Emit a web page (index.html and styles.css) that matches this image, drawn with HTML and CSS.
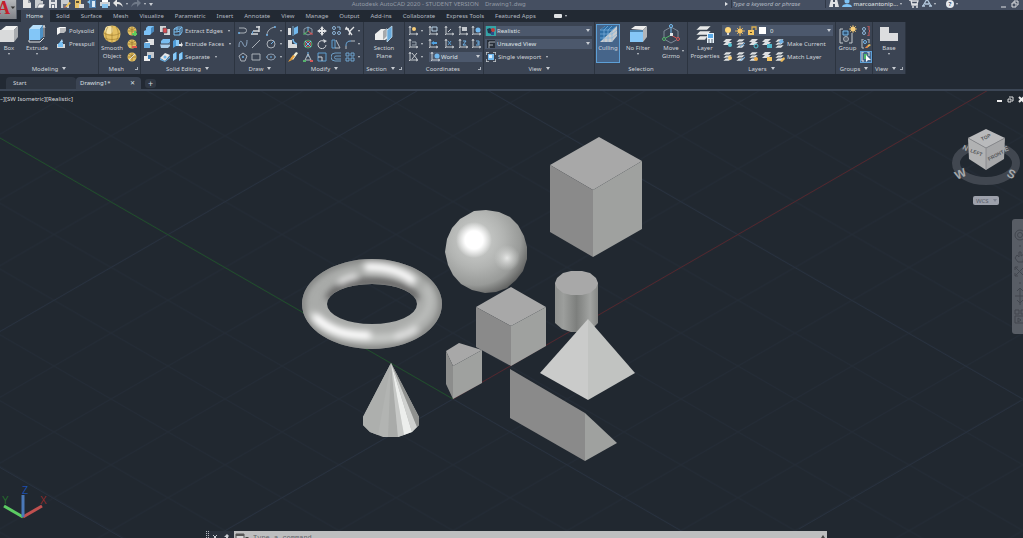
FILE: index.html
```html
<!DOCTYPE html>
<html lang="en">

<head>
    <meta charset="UTF-8">
    <meta name="viewport" content="width=device-width, initial-scale=1.0">
    <title>Autodesk AutoCAD 2020 - Drawing1.dwg</title>
    <link rel="stylesheet" href="styles.css">
</head>

<body>
    <!-- Icon sprite -->
    <svg class="sprite" aria-hidden="true">
        <symbol id="new" viewBox="0 0 10 10"><path d="M1 0h5l3 4v5H1z" fill="#e4e4e4"/><path d="M6 0v4h3" fill="#9aa0a8"/></symbol>
        <symbol id="open" viewBox="0 0 10 10"><path d="M0 0h5l1 2h2v7H0z" fill="#c9ccd0"/><path d="M2 9l2-4h6L8 9z" fill="#f3f3f3" stroke="#454f61" stroke-width=".5"/></symbol>
        <symbol id="save" viewBox="0 0 10 10"><path d="M1 0h8v9H1z" fill="#dfe1e4"/><path d="M3 5h4v4H3zM3 0h4v3H3z" fill="#6d7685"/><path d="M4 6h2v3H4z" fill="#eee"/></symbol>
        <symbol id="saveas" viewBox="0 0 10 10"><path d="M0 0h8v9H0z" fill="#c9ccd0"/><path d="M2 5h4v4H2z" fill="#6d7685"/><path d="M4 8l4-5 2 1-4 4z" fill="#f0c35a"/><path d="M3 9l1-2 1 1z" fill="#d85040"/></symbol>
        <symbol id="openweb" viewBox="0 0 10 10"><path d="M1 0h6v9H1z" fill="#e9c46a"/><path d="M5 5h5v4H5z" fill="#d8d8d8"/><path d="M2 2h3v2H2z" fill="#5b5136"/></symbol>
        <symbol id="saveweb" viewBox="0 0 10 10"><path d="M2 0h7v9H2z" fill="#4e7fae"/><path d="M5 2h3v6H5z" fill="#dbe9f5"/><path d="M0 3l3-2v4z" fill="#7fc3f5"/></symbol>
        <symbol id="print" viewBox="0 0 10 10"><path d="M2 0h6v3H2z" fill="#fff"/><path d="M0 3h10v4H0z" fill="#cfd2d6"/><path d="M2 5h6v4H2z" fill="#88c4ee"/></symbol>
        <symbol id="undo" viewBox="0 0 10 10"><path d="M0 4l4-4v3c4 0 5 2 6 5-2-2-3-3-6-3v3z" fill="#e4e4e4"/></symbol>
        <symbol id="redo" viewBox="0 0 10 10"><path d="M10 4L6 0v3C2 3 1 5 0 8c2-2 3-3 6-3v3z" fill="#6f7988"/></symbol>

        <symbol id="box" viewBox="0 0 18 20"><path d="M1 6l5-4h12l-4 4z" fill="#f1f1f1"/><path d="M14 6l4-4v11l-4 5z" fill="#a9acb0"/><path d="M0 6h14v12H0z" fill="#d9dadb"/></symbol>
        <symbol id="extrude" viewBox="0 0 18 20"><path d="M1 5l4-4h10l-3 4z" fill="#b7defa"/><path d="M12 5l3-4v12l-3 3z" fill="#4d91c6"/><path d="M1 5h11v11H1z" fill="#83c6f7"/><path d="M1 16v2h11l4-4" fill="none" stroke="#e0e0e0"/><path d="M16 13V2M15 4l1-3 1 3" fill="none" stroke="#e0e0e0" stroke-width=".8"/></symbol>
        <symbol id="polysolid" viewBox="0 0 10 10"><path d="M1 2l3-1v6L1 9z" fill="#f4f4f4"/><path d="M4 1h6v4l-2 2H4z" fill="#b9bbbe"/><path d="M4 1h6l-1 1H3z" fill="#fff"/></symbol>
        <symbol id="presspull" viewBox="0 0 10 10"><path d="M1 5h8v4H1z" fill="#d5d7d9"/><path d="M2 5l3-3 2 2v4H2z" fill="#79c0f4"/><path d="M4 3l2-3 1 3z" fill="#aedafa"/></symbol>
        <symbol id="smooth" viewBox="0 0 18 20"><circle cx="9" cy="10" r="8.500" fill="#e3bf62"/><circle cx="6" cy="6" r="4" fill="#f7e3a4"/><path d="M1 9c4 3 12 3 16 0M2 14c4 2 10 2 14 0M9 2v17M5 3c-3 4-3 10 0 14M13 3c3 4 3 10 0 14" fill="none" stroke="#9c7a2e" stroke-width=".6"/></symbol>
        <symbol id="mesh" viewBox="0 0 10 10"><circle cx="5" cy="5" r="4.500" fill="#e3bf62"/><path d="M1 5h8M5 1v8M2 2c2 2 4 2 6 0" fill="none" stroke="#8f702b" stroke-width=".7"/></symbol>
        <symbol id="union" viewBox="0 0 10 10"><path d="M0 5l2-1V2l2-2h6v5L7 7v1L6 9H0z" fill="#7cc1f5"/><path d="M7 2l3-2v5L7 8z" fill="#4788bd"/></symbol>
        <symbol id="subtract" viewBox="0 0 10 10"><path d="M3 0h7v6H6z" fill="#dfe0e1"/><path d="M0 4h6v5H0z" fill="#68aee3"/><path d="M0 4l2-1h5L6 4z" fill="#f1f1f1"/></symbol>
        <symbol id="intersect" viewBox="0 0 10 10"><path d="M3 0h7v6H3z" fill="#c6c9cc"/><path d="M0 4h6v5H0z" fill="#ececec"/><path d="M4 3h3v4H4z" fill="#397fb9"/></symbol>
        <symbol id="interfere" viewBox="0 0 10 10"><path d="M0 0h6v6H0zM4 3h6v6H4z" fill="#d4d6d8"/><path d="M3 2h4v5H3z" fill="#d94e52" stroke="#3b4453" stroke-width=".6"/></symbol>
        <symbol id="slice" viewBox="0 0 10 10"><path d="M1 2l2-2h7v3L8 5H1z" fill="#79bdf0"/><path d="M0 5h8l2-1v3L8 9H1z" fill="#a9cde9"/><path d="M0 5h10" stroke="#3d4656"/></symbol>
        <symbol id="thicken" viewBox="0 0 10 10"><path d="M0 6l5-5 5 2-5 6z" fill="#e6e6e6"/><path d="M0 6l5 3 5-5v2l-5 4-5-2z" fill="#64acdf"/><circle cx="5" cy="5" r="1.500" fill="#6fb6eb"/></symbol>
        <symbol id="edges" viewBox="0 0 10 10"><path d="M1 3l3-2h5v5L7 9H1zM1 3h6v6M7 3l2-2M4 1v5H1M4 6l3-1" fill="none" stroke="#79bdf0"/></symbol>
        <symbol id="faces" viewBox="0 0 10 10"><path d="M0 2l3-2v7L0 9z" fill="#4f9cd8"/><path d="M3 1h3v6H3z" fill="#8acaf7"/><path d="M6 5h2V3l2 3-2 2V7H6z" fill="#e4e4e4"/></symbol>
        <symbol id="separate" viewBox="0 0 10 10"><path d="M0 2l3-2v7L0 9zM6 2l3-2v7L6 9z" fill="#8acaf7"/><path d="M3 0h1v7H3zM9 0h1v7H9z" fill="#4587b9"/></symbol>

        <symbol id="pline" viewBox="0 0 10 10"><path d="M1 2h5a2 2 0 010 5H1" fill="none" stroke="#aab0b8"/><circle cx="1" cy="7" r="1" fill="#6fb1e6"/></symbol>
        <symbol id="helix" viewBox="0 0 10 10"><path d="M8 0v6M5 1h4M2 5h6M0 8h7" fill="none" stroke="#d5d8dc" stroke-width="1.500"/><path d="M2 5l-1 3" stroke="#70aee0"/></symbol>
        <symbol id="arc" viewBox="0 0 10 10"><path d="M1 9c0-4 3-7 8-8" fill="none" stroke="#aab0b8"/><circle cx="1" cy="9" r="1" fill="#6fb1e6"/><circle cx="9" cy="1" r="1" fill="#6fb1e6"/></symbol>
        <symbol id="spline" viewBox="0 0 10 10"><path d="M1 8c0-8 3-6 4-3s4 5 4-4" fill="none" stroke="#8ea8c4"/></symbol>
        <symbol id="line" viewBox="0 0 10 10"><path d="M1 9l8-8" stroke="#aab0b8"/></symbol>
        <symbol id="circle" viewBox="0 0 10 10"><circle cx="5" cy="5" r="4" fill="none" stroke="#aab0b8"/><path d="M5 5l3-3" stroke="#6fb1e6"/></symbol>
        <symbol id="polygon" viewBox="0 0 10 10"><path d="M5 1l4 3-2 5H3L1 4z" fill="none" stroke="#aab0b8"/><circle cx="5" cy="5" r="1" fill="#6fb1e6"/></symbol>
        <symbol id="rect" viewBox="0 0 10 10"><path d="M1 2h8v6H1z" fill="none" stroke="#aab0b8"/></symbol>
        <symbol id="ellipse" viewBox="0 0 10 10"><ellipse cx="5" cy="5" rx="4" ry="3" fill="none" stroke="#8e9bab"/><path d="M4 5h2M0 5h1M9 5h1" stroke="#6fb1e6"/></symbol>

        <symbol id="mirror" viewBox="0 0 10 10"><path d="M0 2h3v7H0z" fill="#dfe1e3"/><path d="M6 2l4-2v7L6 9z" fill="#72b8ed"/><path d="M5 0v10" stroke="#8ecaf5" stroke-width=".7"/></symbol>
        <symbol id="fillet3d" viewBox="0 0 10 10"><path d="M0 1h4v4h5v4H0z" fill="#d8dadc"/><path d="M5 0c0 3 1 4 4 5" fill="none" stroke="#72b8ed" stroke-width="1.500"/></symbol>
        <symbol id="erase" viewBox="0 0 10 10"><path d="M3 6l5-6 2 1-5 7z" fill="#f2f0d8"/><path d="M2 7l3-4 2 1-3 4z" fill="#e8a03a"/><path d="M0 10l2-3 2 1z" fill="#e8a03a"/></symbol>
        <symbol id="gizmo" viewBox="0 0 10 10"><path d="M5 1l4 2v4L5 9 1 7V3z" fill="none" stroke="#8b98a6"/><path d="M5 5V1" stroke="#76bff4"/><path d="M5 5L1 8M0 8h3" stroke="#55b36c"/><path d="M5 5l4 3M7 8h3" stroke="#d65858"/></symbol>
        <symbol id="rotate3d" viewBox="0 0 10 10"><circle cx="5" cy="5" r="4" fill="none" stroke="#4fa768"/><circle cx="5" cy="5" r="2.500" fill="none" stroke="#d65858"/><path d="M2 2l6 6M8 2L2 8" stroke="#76bff4"/></symbol>
        <symbol id="scale3d" viewBox="0 0 10 10"><path d="M5 0v5" stroke="#76bff4"/><path d="M5 2l3 6H2z" fill="none" stroke="#b8bec5"/><path d="M0 9h3" stroke="#55b36c" stroke-width="2"/><path d="M7 9h3" stroke="#d65858" stroke-width="2"/></symbol>
        <symbol id="move" viewBox="0 0 10 10"><path d="M5 0l2 3H6v1h1V3l3 2-3 2V6H6v1h1l-2 3-2-3h1V6H3v1L0 5l3-2v1h1V3H3z" fill="#e2e4e6"/></symbol>
        <symbol id="rotate" viewBox="0 0 10 10"><path d="M8 3a4 4 0 10 1 3" fill="none" stroke="#d0d3d7"/><path d="M6 0l4 2-3 2z" fill="#d0d3d7"/></symbol>
        <symbol id="scale" viewBox="0 0 10 10"><path d="M1 1h8v8H1z" fill="none" stroke="#5f9fd2"/><path d="M1 5h4v4" fill="none" stroke="#d0d3d7"/></symbol>
        <symbol id="copy" viewBox="0 0 10 10"><g fill="none" stroke="#8fb6d8"><circle cx="3" cy="2" r="1.500"/><circle cx="3" cy="7" r="1.500"/><circle cx="8" cy="7" r="1.500"/><path d="M6 1h3v3"/></g></symbol>
        <symbol id="stretch" viewBox="0 0 10 10"><path d="M1 1h3v8H1z" fill="none" stroke="#5f9fd2"/><path d="M5 1l4 8H4" fill="none" stroke="#b8bec5"/></symbol>
        <symbol id="offset" viewBox="0 0 10 10"><path d="M10 1H4a4 4 0 000 8h6M10 4H5a1 1 0 000 3h5" fill="none" stroke="#6c9cc4"/></symbol>
        <symbol id="trim" viewBox="0 0 10 10"><path d="M1 1l6 8M9 1L5 5M5 5l-1 4M0 3h4" fill="none" stroke="#e2e4e6" stroke-width="1.300"/></symbol>
        <symbol id="fillet" viewBox="0 0 10 10"><path d="M1 10V7" stroke="#b8bec5"/><path d="M1 7c0-4 2-5 5-5" fill="none" stroke="#6fb1e6"/><path d="M6 2h4" stroke="#b8bec5"/></symbol>
        <symbol id="array" viewBox="0 0 10 10"><path d="M1 1h3v3H1zM6 1h3v3H6zM1 6h3v3H1zM6 6h3v3H6z" fill="none" stroke="#6fa4d0"/></symbol>

        <symbol id="section" viewBox="0 0 18 20"><path d="M0 10l6-5h8v8l-4 3H0z" fill="#eceded"/><path d="M8 7l4-3v8l-4 4z" fill="#a6a9ac"/><path d="M12 6l5-4v11l-5 5z" fill="#67a9da" stroke="#cfe6f7" stroke-width=".7"/></symbol>

        <symbol id="ucs" viewBox="0 0 10 10"><path d="M2 1v7h7M1 2l1-2 1 2M8 7l2 1-2 1M2 8l-1 1" fill="none" stroke="#c4c8cd"/></symbol>
        <symbol id="bulb" viewBox="0 0 10 10"><circle cx="5" cy="4" r="3" fill="#ffd77a"/><path d="M4 7h2v2H4z" fill="#d8d8d8"/></symbol>
        <symbol id="sun" viewBox="0 0 10 10"><circle cx="5" cy="5" r="2.500" fill="#f5c463"/><path d="M5 0v10M0 5h10M2 2l6 6M8 2L2 8" stroke="#f5c463" stroke-width=".8"/></symbol>
        <symbol id="unlock" viewBox="0 0 10 10"><path d="M1 4h6v5H1z" fill="#f2c462"/><path d="M5 4V1h4v3" fill="none" stroke="#d9ad50" stroke-width="1.300"/><path d="M3 6h2v1H3z" fill="#5a4a26"/></symbol>

        <symbol id="realistic" viewBox="0 0 10 10"><path d="M0 0h10v10H0z" fill="#35a3a6"/><path d="M1 3l3-1 2 2v4L2 7z" fill="#24324a"/><circle cx="7" cy="4" r="2" fill="#c23b3b"/><path d="M5 6h3v3H5z" fill="#2c4d8a"/></symbol>
        <symbol id="saved" viewBox="0 0 10 10"><path d="M1 1h8v8H1z" fill="#272e38"/><path d="M3 3h6M3 6h4M3 3v6" stroke="#a5abb3"/></symbol>
        <symbol id="viewport" viewBox="0 0 10 10"><path d="M0 3V0h3M7 0h3v3M10 7v3H7M3 10H0V7" fill="none" stroke="#c8ccd0" stroke-width="1.500"/><path d="M2 2h6v6H2z" fill="#74b9ee"/><path d="M3 3h3v3H3z" fill="#d8ecfb"/></symbol>

        <symbol id="culling" viewBox="0 0 18 20"><path d="M1 6l5-4h12v10l-5 6H1z" fill="#c9cbcd"/><path d="M1 6l5-4h12L1 18z" fill="#2f6ea5"/><path d="M1 6h12v12M5 6v12M9 6v12M1 10h12M1 14h12M13 6l5-4M13 10l5-4M13 14l5-4M5 6l4-4M9 6l4-4" fill="none" stroke="#7fb3dc" stroke-width=".7"/></symbol>
        <symbol id="nofilter" viewBox="0 0 18 20"><path d="M2 5l4-3h12l-4 4z" fill="#ededed"/><path d="M14 6l4-4v11l-4 5z" fill="#b3b5b8"/><path d="M1 6h13v12H1z" fill="#86c7f7"/><path d="M1 6h13v2H1z" fill="#4d84ae"/></symbol>
        <symbol id="movegizmo" viewBox="0 0 18 20"><path d="M9 3l7 4v8l-7 4-7-4V7z" fill="none" stroke="#7e8a98"/><path d="M9 11V2" stroke="#76bff4"/><path d="M9 11l-7 4" stroke="#55b36c"/><path d="M9 11l7 4" stroke="#d65858"/><circle cx="9" cy="2" r="1.500" fill="#3b4453" stroke="#76bff4"/><circle cx="2" cy="15" r="1.500" fill="#3b4453" stroke="#55b36c"/><circle cx="16" cy="15" r="1.500" fill="#3b4453" stroke="#d65858"/><path d="M8 9h3v3H8z" fill="#e2e4e6"/></symbol>

        <symbol id="layerprops" viewBox="0 0 18 20"><path d="M4 2h11l-4 4H0zM4 7h11l-4 4H0zM4 12h8l-3 4H0z" fill="#e6e7e8" stroke="#3b4453" stroke-width=".5"/><path d="M11 9h7v10h-7z" fill="#e9f3fb"/><path d="M12 10h5v4h-5z" fill="#5aa9e6"/><path d="M12 16h2M15 16h2M12 18h2M15 18h2" stroke="#56606e"/></symbol>
        <symbol id="layer" viewBox="0 0 10 10"><path d="M3 0h6L6 3H0zM3 3h6L6 6H0z" fill="#dddfe1"/></symbol>
        <symbol id="layers" viewBox="0 0 10 10"><path d="M3 0h6L6 3H0zM3 3h6L6 6H0zM3 6h6L6 9H0z" fill="#dddfe1" stroke="#3b4453" stroke-width=".5"/></symbol>
        <symbol id="group" viewBox="0 0 18 20"><path d="M4 5H1v14h3M10 19h3V9" fill="none" stroke="#c4c8cd"/><path d="M4 7h5v4H4z" fill="#315577" stroke="#76b8eb"/><circle cx="7" cy="15" r="2.500" fill="#59616e" stroke="#a8adb4"/><circle cx="14" cy="5" r="2.500" fill="#f7cd78"/><path d="M14 1v8M10 5h8M11 2l6 6M17 2l-6 6" stroke="#f7cd78" stroke-width=".7"/></symbol>
        <symbol id="ungroup" viewBox="0 0 10 10"><path d="M6 0h2v4l1 1-1 1v4H6" fill="none" stroke="#cc5d5d"/><circle cx="3" cy="3" r="1.500" fill="none" stroke="#8fb6d8"/><circle cx="3" cy="7" r="1.500" fill="none" stroke="#8fb6d8"/></symbol>
        <symbol id="groupedit" viewBox="0 0 10 10"><path d="M3 0H1v9h2M6 0h2v4" fill="none" stroke="#b8bec5"/><circle cx="4" cy="3" r="1.500" fill="none" stroke="#76b8eb"/><path d="M4 9l4-4 2 1-4 3z" fill="#eebc5c"/><path d="M4 9l2-2 1 1z" fill="#d85040"/></symbol>
        <symbol id="groupsel" viewBox="0 0 10 10"><path d="M3 0H1v9h2M6 0h2v4" fill="none" stroke="#dfe3e8"/><path d="M3 2h3v5H3z" fill="#4fba6b"/><path d="M5 3l5 5H7l-2 2z" fill="#fff"/></symbol>
        <symbol id="base" viewBox="0 0 18 20"><path d="M0 3h9v6h9v8H0z" fill="#dcdddf"/></symbol>

        <symbol id="find" viewBox="0 0 10 10"><path d="M2 0h2v3h2V0h2l2 8H6V5H4v3H0z" fill="#dfe1e4"/></symbol>
        <symbol id="user" viewBox="0 0 10 10"><circle cx="5" cy="2" r="2.500" fill="#7fc3f5"/><path d="M0 8c0-4 10-4 10 0z" fill="#7fc3f5"/></symbol>
        <symbol id="cart" viewBox="0 0 10 10"><path d="M0 1h2l1 5h6M2 2h7l-1 3H3" fill="none" stroke="#dfe1e4" stroke-width="1.300"/><circle cx="4" cy="8" r="1" fill="#dfe1e4"/><circle cx="8" cy="8" r="1" fill="#dfe1e4"/></symbol>
        <symbol id="share" viewBox="0 0 10 10"><path d="M5 0L1 7M5 0l4 7M0 7h3M7 7h3M3 5h4" fill="none" stroke="#b4c9dd" stroke-width="1.300"/></symbol>
    </svg>

    <header class="titlebar">
        <button class="app-button" type="button" aria-label="Application menu">
            <svg width="18" height="20" viewBox="0 0 18 20"><text class="app-logo" x="-3" y="14">A</text><path d="M12 6h5l-2.500 3z" fill="#333"/></svg>
        </button>
        <nav class="quick-access">
            <button type="button" aria-label="New"><svg class="icon"><use href="#new"/></svg></button>
            <button type="button" aria-label="Open"><svg class="icon"><use href="#open"/></svg></button>
            <button type="button" aria-label="Save"><svg class="icon"><use href="#save"/></svg></button>
            <button type="button" aria-label="Save as"><svg class="icon"><use href="#saveas"/></svg></button>
            <button type="button" aria-label="Open from web"><svg class="icon"><use href="#openweb"/></svg></button>
            <button type="button" aria-label="Save to web"><svg class="icon"><use href="#saveweb"/></svg></button>
            <button type="button" aria-label="Plot"><svg class="icon"><use href="#print"/></svg></button>
            <button type="button" aria-label="Undo"><svg class="icon"><use href="#undo"/></svg></button>
            <i class="dot"></i>
            <button type="button" aria-label="Redo"><svg class="icon"><use href="#redo"/></svg></button>
            <i class="dot"></i>
            <i class="caret"></i>
        </nav>
        <div class="title"><span>Autodesk AutoCAD 2020 - STUDENT VERSION</span><span>Drawing1.dwg</span></div>
        <div class="account">
            <span class="play"></span>
            <input class="search" type="text" placeholder="Type a keyword or phrase" aria-label="Search">
            <button type="button" aria-label="Find"><svg class="icon"><use href="#find"/></svg></button>
            <button type="button" class="user"><svg class="icon"><use href="#user"/></svg>marcoantonip...<i class="dot"></i></button>
            <button type="button" aria-label="App store"><svg class="icon"><use href="#cart"/></svg></button>
            <button type="button" aria-label="Autodesk apps"><svg class="icon"><use href="#share"/></svg><i class="dot"></i></button>
            <button type="button" class="help" aria-label="Help"><span class="help-mark">?</span><i class="dot"></i></button>
            <button type="button" class="win" aria-label="Minimize"><svg width="8" height="9"><path d="M1 7h5" stroke="#dfe1e4" stroke-width="1"/></svg></button>
            <button type="button" class="win" aria-label="Restore"><svg width="8" height="9"><path d="M3 3V1h4v4H6M1 3h4v4H1z" fill="none" stroke="#dfe1e4"/></svg></button>
        </div>
    </header>

    <nav class="menu">
        <a href="#" class="active">Home</a>
        <a href="#">Solid</a>
        <a href="#">Surface</a>
        <a href="#">Mesh</a>
        <a href="#">Visualize</a>
        <a href="#">Parametric</a>
        <a href="#">Insert</a>
        <a href="#">Annotate</a>
        <a href="#">View</a>
        <a href="#">Manage</a>
        <a href="#">Output</a>
        <a href="#">Add-ins</a>
        <a href="#">Collaborate</a>
        <a href="#">Express Tools</a>
        <a href="#">Featured Apps</a>
        <button type="button" class="ribbon-toggle" aria-label="Minimize ribbon"><span class="pill"></span><i class="dot"></i></button>
    </nav>

    <section class="ribbon">
        <div class="panel modeling">
            <div class="tools">
                <button class="big"><svg><use href="#box"/></svg>Box<i class="dot"></i></button>
                <button class="big"><svg><use href="#extrude"/></svg>Extrude<i class="dot"></i></button>
                <button class="item"><svg class="icon"><use href="#polysolid"/></svg>Polysolid</button>
                <button class="item"><svg class="icon"><use href="#presspull"/></svg>Presspull</button>
            </div>
            <h2>Modeling<i class="caret"></i></h2>
        </div>

        <div class="panel mesh">
            <div class="tools">
                <button class="big"><svg><use href="#smooth"/></svg>Smooth<br>Object</button>
                <button aria-label="Smooth more"><svg class="icon"><use href="#mesh"/><path d="M5 8h5M8 5v5" stroke="#5ecb5e" stroke-width="2"/></svg></button>
                <button aria-label="Smooth less"><svg class="icon"><use href="#mesh"/><path d="M5 8h5" stroke="#e0574c" stroke-width="2"/></svg></button>
                <button aria-label="Refine mesh"><svg class="icon"><use href="#mesh"/><path d="M2 8l6-6" stroke="#dcdcdc"/></svg></button>
            </div>
            <h2>Mesh<i class="corner"></i></h2>
        </div>

        <div class="panel solid">
            <div class="tools">
                <button aria-label="Union"><svg class="icon"><use href="#union"/></svg></button>
                <button aria-label="Interfere"><svg class="icon"><use href="#interfere"/></svg></button>
                <button class="item"><svg class="icon"><use href="#edges"/></svg>Extract Edges<i class="dot"></i></button>
                <button aria-label="Subtract"><svg class="icon"><use href="#subtract"/></svg></button>
                <button aria-label="Slice"><svg class="icon"><use href="#slice"/></svg></button>
                <button class="item"><svg class="icon"><use href="#faces"/></svg>Extrude Faces<i class="dot"></i></button>
                <button aria-label="Intersect"><svg class="icon"><use href="#intersect"/></svg></button>
                <button aria-label="Thicken"><svg class="icon"><use href="#thicken"/></svg></button>
                <button class="item"><svg class="icon"><use href="#separate"/></svg>Separate<i class="dot"></i></button>
            </div>
            <h2>Solid Editing<i class="caret"></i></h2>
        </div>

        <div class="panel draw">
            <div class="tools">
                <button aria-label="Polyline"><svg class="icon"><use href="#pline"/></svg></button>
                <button aria-label="Helix"><svg class="icon"><use href="#helix"/></svg></button>
                <button aria-label="Arc"><svg class="icon"><use href="#arc"/></svg></button>
                <i class="dot"></i>
                <button aria-label="Spline"><svg class="icon"><use href="#spline"/></svg></button>
                <button aria-label="Line"><svg class="icon"><use href="#line"/></svg></button>
                <button aria-label="Circle"><svg class="icon"><use href="#circle"/></svg></button>
                <i class="dot"></i>
                <button aria-label="Polygon"><svg class="icon"><use href="#polygon"/></svg></button>
                <button aria-label="Rectangle"><svg class="icon"><use href="#rect"/></svg></button>
                <button aria-label="Ellipse"><svg class="icon"><use href="#ellipse"/></svg></button>
                <i class="dot"></i>
            </div>
            <h2>Draw<i class="caret"></i></h2>
        </div>

        <div class="panel modify">
            <div class="tools">
                <button aria-label="3D mirror"><svg class="icon"><use href="#mirror"/></svg></button>
                <button aria-label="3D move"><svg class="icon"><use href="#gizmo"/></svg></button>
                <button aria-label="Move"><svg class="icon"><use href="#move"/></svg></button>
                <button aria-label="Copy"><svg class="icon"><use href="#copy"/></svg></button>
                <button aria-label="Trim"><svg class="icon"><use href="#trim"/></svg></button>
                <i class="dot"></i>
                <button aria-label="Fillet edge"><svg class="icon"><use href="#fillet3d"/></svg></button>
                <button aria-label="3D rotate"><svg class="icon"><use href="#rotate3d"/></svg></button>
                <button aria-label="Rotate"><svg class="icon"><use href="#rotate"/></svg></button>
                <button aria-label="Stretch"><svg class="icon"><use href="#stretch"/></svg></button>
                <button aria-label="Fillet"><svg class="icon"><use href="#fillet"/></svg></button>
                <i class="dot"></i>
                <button aria-label="Erase"><svg class="icon"><use href="#erase"/></svg></button>
                <button aria-label="3D scale"><svg class="icon"><use href="#scale3d"/></svg></button>
                <button aria-label="Scale"><svg class="icon"><use href="#scale"/></svg></button>
                <button aria-label="Offset"><svg class="icon"><use href="#offset"/></svg></button>
                <button aria-label="Array"><svg class="icon"><use href="#array"/></svg></button>
                <i class="dot"></i>
            </div>
            <h2>Modify<i class="caret"></i></h2>
        </div>

        <div class="panel section-plane">
            <div class="tools">
                <button class="big"><svg><use href="#section"/></svg>Section<br>Plane</button>
            </div>
            <h2>Section<i class="caret"></i><i class="corner"></i></h2>
        </div>

        <div class="panel coordinates">
            <div class="tools">
                <button aria-label="UCS"><svg class="icon"><use href="#ucs"/><circle cx="6" cy="3" r="2" fill="#f7cd78"/></svg></button>
                <i class="dot"></i>
                <button aria-label="View UCS"><svg class="icon"><use href="#ucs"/><path d="M4 1h5v4H4z" fill="none" stroke="#b6cfe4"/></svg></button>
                <button aria-label="Origin"><svg class="icon"><use href="#ucs"/><path d="M4 6l3-3" stroke="#c4c8cd"/></svg></button>
                <button aria-label="Face UCS"><svg class="icon"><use href="#ucs"/><path d="M4 1h5v4H4z" fill="#c4c8cd"/></svg></button>
                <button aria-label="World UCS"><svg class="icon"><use href="#ucs"/><circle cx="7" cy="4" r="2.500" fill="#72b8ed"/></svg></button>
                <button aria-label="UCS icon"><svg class="icon"><use href="#ucs"/><path d="M4 3h4v3H4" fill="none" stroke="#9aa4af"/></svg></button>
                <i class="dot"></i>
                <button aria-label="Previous UCS"><svg class="icon"><use href="#ucs"/><path d="M3 4l3-2v1h3v2H6v1z" fill="#4fa3e3"/></svg></button>
                <button aria-label="X"><svg class="icon"><use href="#ucs"/><path d="M4 2l3 4M7 2L4 6" stroke="#5d9dd0"/></svg></button>
                <button aria-label="Z"><svg class="icon"><use href="#ucs"/><path d="M5 2h3L5 6h3" fill="none" stroke="#6fb1e6"/></svg></button>
                <button aria-label="3 point"><svg class="icon"><use href="#ucs"/><path d="M5 2h3v4H5M6 4h2" fill="none" stroke="#6fb1e6"/></svg></button>
                <button aria-label="Hide UCS"><svg class="icon"><use href="#ucs"/><path d="M4 1l5 6M9 1L4 7" stroke="#c4c8cd"/></svg></button>
                <i class="dot"></i>
                <div class="field">
                    <svg class="icon"><use href="#ucs"/><circle cx="7" cy="4" r="2.500" fill="#72b8ed"/></svg>
                    <select aria-label="Named UCS"><option>World</option></select><i class="caret"></i>
                </div>
            </div>
            <h2>Coordinates<i class="corner"></i></h2>
        </div>

        <div class="panel view">
            <div class="tools">
                <div class="field">
                    <svg class="icon"><use href="#realistic"/></svg>
                    <select aria-label="Visual style"><option>Realistic</option></select><i class="caret"></i>
                </div>
                <div class="field">
                    <svg class="icon"><use href="#saved"/></svg>
                    <select aria-label="Saved view"><option>Unsaved View</option></select><i class="caret"></i>
                </div>
                <button class="item"><svg class="icon"><use href="#viewport"/></svg>Single viewport<i class="dot"></i></button>
            </div>
            <h2>View<i class="caret"></i></h2>
        </div>

        <div class="panel selection">
            <div class="tools">
                <button class="big pressed"><svg><use href="#culling"/></svg>Culling</button>
                <button class="big"><svg><use href="#nofilter"/></svg>No Filter<i class="dot"></i></button>
                <button class="big gizmo"><svg><use href="#movegizmo"/></svg>Move<br>Gizmo</button>
                <i class="dot"></i>
            </div>
            <h2>Selection</h2>
        </div>

        <div class="panel layers">
            <div class="tools">
                <button class="big"><svg><use href="#layerprops"/></svg>Layer<br>Properties</button>
                <div class="field">
                    <svg class="icon"><use href="#bulb"/></svg>
                    <svg class="icon"><use href="#sun"/></svg>
                    <svg class="icon"><use href="#unlock"/></svg>
                    <span class="swatch"></span>
                    <select aria-label="Layer"><option>0</option></select><i class="caret"></i>
                </div>
                <button aria-label="Layer off"><svg class="icon"><use href="#layer"/><circle cx="7" cy="6" r="2" fill="#56c6d4"/></svg></button>
                <button aria-label="Isolate layer"><svg class="icon"><use href="#layers"/><path d="M4 8l5-4" stroke="#6fb1e6"/></svg></button>
                <button aria-label="Freeze layer"><svg class="icon"><use href="#layer"/><circle cx="7" cy="7" r="2" fill="none" stroke="#56c6d4"/></svg></button>
                <button aria-label="Lock layer"><svg class="icon"><use href="#layer"/><path d="M5 5h5v4H5z" fill="#4fb7cb"/></svg></button>
                <button class="item"><svg class="icon"><use href="#layers"/><path d="M4 2l3-2 2 3-4 2z" fill="#6fb1e6"/></svg>Make Current</button>
                <button aria-label="All layers on"><svg class="icon"><use href="#layers"/><circle cx="7" cy="6" r="2" fill="#f7cd78"/></svg></button>
                <button aria-label="Unisolate"><svg class="icon"><use href="#layers"/><path d="M4 9l5-4" stroke="#6fb1e6"/></svg></button>
                <button aria-label="Thaw all"><svg class="icon"><use href="#layers"/><circle cx="7" cy="7" r="2" fill="#f0b14e"/></svg></button>
                <button aria-label="Unlock layer"><svg class="icon"><use href="#layer"/><path d="M5 5h5v4H5z" fill="#f2c462"/></svg></button>
                <button class="item"><svg class="icon"><use href="#layers"/><path d="M5 9l4-4 1 2-3 3z" fill="#eebc5c"/></svg>Match Layer</button>
            </div>
            <h2>Layers<i class="caret"></i></h2>
        </div>

        <div class="panel groups">
            <div class="tools">
                <button class="big"><svg><use href="#group"/></svg>Group</button>
                <button aria-label="Ungroup"><svg class="icon"><use href="#ungroup"/></svg></button>
                <button aria-label="Group edit"><svg class="icon"><use href="#groupedit"/></svg></button>
                <button class="pressed" aria-label="Group selection"><svg class="icon"><use href="#groupsel"/></svg></button>
            </div>
            <h2>Groups<i class="caret"></i></h2>
        </div>

        <div class="panel base">
            <div class="tools">
                <button class="big"><svg><use href="#base"/></svg>Base<i class="dot"></i></button>
            </div>
            <h2>View<i class="caret"></i><i class="corner"></i></h2>
        </div>
    </section>

    <nav class="files">
        <a href="#" class="file">Start</a>
        <a href="#" class="file current">Drawing1*<span class="close">✕</span></a>
        <button type="button" class="add" aria-label="New drawing">+</button>
    </nav>

    <main class="viewport">
        <svg class="scene" aria-label="Model space">
            <defs>
                <pattern id="grid" x="453" y="399" width="114" height="65.800" patternUnits="userSpaceOnUse">
                    <path d="M0 0l114 65.800M0 65.800L114 0" stroke="#242c37" stroke-width="1"/>
                </pattern>
                <radialGradient id="ball" cx=".38" cy=".36" r=".68">
                    <stop offset="0" stop-color="#d2d4d2"/><stop offset=".5" stop-color="#b2b4b2"/><stop offset=".8" stop-color="#989a98"/><stop offset="1" stop-color="#626362"/>
                </radialGradient>
                <radialGradient id="shine">
                    <stop offset="0" stop-color="#fff"/><stop offset=".5" stop-color="#fff"/><stop offset="1" stop-color="#fff" stop-opacity="0"/>
                </radialGradient>
                <radialGradient id="glint">
                    <stop offset="0" stop-color="#e6e7e6"/><stop offset="1" stop-color="#d0d2d0" stop-opacity="0"/>
                </radialGradient>
                <linearGradient id="side">
                    <stop offset="0" stop-color="#8f918f"/><stop offset=".2" stop-color="#9c9e9c"/><stop offset=".5" stop-color="#7d7f7d"/><stop offset=".62" stop-color="#8a8c8a"/><stop offset=".82" stop-color="#a2a4a2"/><stop offset="1" stop-color="#858785"/>
                </linearGradient>
                <clipPath id="ring"><path clip-rule="evenodd" d="M302 304a70 45 0 01140 0a70 45 0 01-140 0zM327 304a45 20 0 0090 0a45 20 0 00-90 0z"/></clipPath>
                <filter id="soft" x="-50%" y="-50%" width="200%" height="200%"><feGaussianBlur stdDeviation="3"/></filter>
            </defs>
            <g transform="translate(0 -91)">
                <rect y="91" width="100%" height="100%" fill="url(#grid)"/>
                <path d="M0 331.500L417 91M489 91l900 519.500M0 467.500l260 150M453 399l450 260M453 399L93 607M799 529l450-260" stroke="#29323f" fill="none"/>
                <path d="M0 138l453 261" stroke="#20502a"/>
                <path d="M453 399L1023 70" stroke="#55272d"/>

                <!-- Tall box -->
                <path d="M599 137l43 24-49 29-43-25z" fill="#a8a8a8"/>
                <path d="M550 165l43 25v67l-43-25z" fill="#8a8a8a"/>
                <path d="M593 190l49-29v68l-49 28z" fill="#9fa19f"/>

                <!-- Sphere -->
                <path d="M474 211l12-1 13 2 11 5 8 8 6 11 3 11v12l-4 12-7 9-9 8-11 4-11 1-13-3-11-6-8-9-5-10-3-13 2-13 5-11 8-9z" fill="url(#ball)"/>
                <circle cx="474" cy="240" r="18" fill="url(#shine)"/>
                <circle cx="507" cy="258" r="13" fill="url(#glint)"/>

                <!-- Torus -->
                <g clip-path="url(#ring)">
                    <path d="M300 255h145v98H300z" fill="#a9aba9"/>
                    <g filter="url(#soft)" fill="none">
                        <ellipse cx="372" cy="304" rx="70" ry="45" stroke="#747674" stroke-width="5"/>
                        <path d="M329 300c6-24 80-24 87 0" stroke="#666" stroke-width="9"/>
                        <path d="M311 312c10 24 50 30 90 24" stroke="#c8cac8" stroke-width="8"/>
                        <path d="M426 286c10 20 0 36-28 46" stroke="#bcbebc" stroke-width="7"/>
                        <path d="M317 318c14 13 30 17 50 17M368 267c18 0 34 5 44 13" stroke="#fff" stroke-width="8" stroke-linecap="round"/>
                        <path d="M339 283c6-5 12-6 18-7M395 337c10-1 18-5 22-9" stroke="#ececec" stroke-width="5"/>
                    </g>
                </g>

                <!-- Cylinder -->
                <path d="M555 283v40l7 6 9 3h12l8-2 7-7v-40z" fill="url(#side)"/>
                <path d="M555 283l2-5 6-5 8-2h11l8 2 6 5 2 5-2 5-6 5-8 2h-11l-8-2-6-5z" fill="#a8a8a8"/>

                <!-- Cube -->
                <path d="M511 287l35 20-35 19-35-19z" fill="#a8a8a8"/>
                <path d="M476 307l35 19v40l-35-19z" fill="#8a8a8a"/>
                <path d="M511 326l35-19v39l-35 20z" fill="#9fa19f"/>

                <!-- Triangular prism -->
                <path d="M446 351l13-8 23 7-29 16z" fill="#a8a8a8"/>
                <path d="M446 351l7 15v33l-7-15z" fill="#8c8d8c"/>
                <path d="M453 366l29-16v33l-29 16z" fill="#9fa19f"/>

                <!-- Pyramid -->
                <path d="M588 319l-48 54 48 27z" fill="#cacbca"/>
                <path d="M588 319l47 54-47 27z" fill="#c1c3c1"/>

                <!-- Wedge -->
                <path d="M510 369l75 44v48l-75-43z" fill="#8a8a8a"/>
                <path d="M585 413l32 30-32 18z" fill="#9fa19f"/>

                <!-- Cone -->
                <path d="M391 363l28 54v8l-7 7-14 5h-15l-13-5-7-7v-8z" fill="#b2b4b2"/>
                <path d="M391 363l-13 72-8-3-7-7v-8z" fill="#adafad"/>
                <path d="M391 363l-3 74h10z" fill="#a9aba9"/>
                <path d="M391 363l7 74 6-2z" fill="#c6c8c6"/>
                <path d="M391 363l13 72 8-3z" fill="#eceeec"/>
                <path d="M391 363l21 69 5-5z" fill="#cfd1cf"/>
                <path d="M391 363l28 54v8l-2 2z" fill="#8f918f"/>

                <!-- UCS axes -->
                <path d="M23 517l-19-11" stroke="#5ccc63" stroke-width="3"/>
                <path d="M23 517l19-11" stroke="#c0504f" stroke-width="3"/>
                <path d="M23 517v-22" stroke="#4a78b8" stroke-width="3"/>
                <text x="2" y="504" fill="#256b2c">Y</text>
                <text x="40" y="504" fill="#8e2b2b">X</text>
                <text x="22" y="494" fill="#1c4fae">Z</text>
            </g>
        </svg>

        <div class="view-label">–][SW Isometric][Realistic]</div>

        <div class="view-controls">
            <button type="button" aria-label="Minimize view"><svg width="9" height="9"><path d="M2 6h5" stroke="#eee" stroke-width="2"/></svg></button>
            <button type="button" aria-label="Restore view"><svg width="9" height="9"><path d="M3 2h4v4H6M2 4h3v3H2z" fill="none" stroke="#ddd"/></svg></button>
            <button type="button" aria-label="Close view"><svg width="9" height="9"><path d="M2 2l5 5M7 2L2 7" stroke="#eee" stroke-width="2"/></svg></button>
        </div>

        <div class="navigator">
            <svg class="viewcube" width="72" height="62" viewBox="0 0 72 62" aria-label="View cube">
                <ellipse cx="36" cy="37" rx="30" ry="18" fill="none" stroke="#414750" stroke-width="8"/>
                <g class="compass">
                    <text transform="translate(12 23) rotate(25)" font-size="7">N</text>
                    <text transform="translate(55 26) rotate(-25)" font-size="7">E</text>
                    <text transform="translate(7 54) rotate(-25)" font-size="12">W</text>
                    <text transform="translate(56 50) rotate(25)" font-size="12">S</text>
                </g>
                <path d="M36 3l19 9-19 10-18-10z" fill="#b9babc"/>
                <path d="M18 12l18 10v22L19 33z" fill="#b1b2b3"/>
                <path d="M36 22l19-10-1 21-18 11z" fill="#a6a7a9"/>
                <path d="M18 12l18 10 19-10M36 22v22" fill="none" stroke="#85878a" stroke-width=".8"/>
                <g class="faces">
                    <text transform="translate(32 15) rotate(-25)">TOP</text>
                    <text transform="translate(20 26) rotate(20)">LEFT</text>
                    <text transform="translate(39 35) rotate(-28)">FRONT</text>
                </g>
            </svg>
            <button type="button" class="wcs">WCS <i class="caret"></i></button>
        </div>

        <div class="navbar">
            <svg width="16" height="115" viewBox="0 0 16 115" fill="none" stroke="#42474f">
                <circle cx="8" cy="16" r="5"/><circle cx="8" cy="16" r="2.500"/>
                <path d="M7 27h2M3 39l2-3 2 2v-5h2v4l3-2-1 8H6z"/>
                <path d="M3 48l9 9M12 48l-9 9M3 51v-3h3M3 54v3h3M7 64h2M8 69v14M5 72l3-3 3 3M3 77h10M5 81l3 3 3-3M7 85h2"/>
                <path d="M3 91h4v4H3zM9 91h4v4H9zM3 97h10v7H3zM6 99l3 2-3 2z"/>
            </svg>
        </div>

        <form class="command">
            <span class="grip"></span>
            <button type="button" class="cmd-button" aria-label="Close"><svg width="8" height="8"><path d="M1 4l4 4M5 4L1 8" stroke="#c9cdd3"/></svg></button>
            <button type="button" class="cmd-button" aria-label="Customize"><svg width="8" height="8"><path d="M4 3l2 2-1 1v2H3V6H1z" fill="#c9cdd3"/></svg></button>
            <div class="cmd-line">
                <svg width="15" height="9"><path d="M2 3h8v6H2z" fill="#d4d5d6" stroke="#555"/><path d="M2 4h8" stroke="#555" stroke-width="2"/><path d="M11 6h4l-2 2z" fill="#444"/></svg>
                <input type="text" placeholder="Type a command" aria-label="Command">
                <i class="up"></i>
            </div>
        </form>
    </main>
</body>

</html>
```
FILE: styles.css
```css
* {
    box-sizing: border-box;
}

body {
    margin: 0;
    height: 100vh;
    display: flex;
    flex-direction: column;
    overflow: hidden;
    background: #222933;
    color: #d0d4da;
    font-family: "Noto Sans", "Open Sans", sans-serif;
    font-size: 6px;
    line-height: 8px;
}

button,
select,
input {
    margin: 0;
    padding: 0;
    border: 0;
    background: none;
    color: inherit;
    font: inherit;
    outline: none;
}

a {
    color: inherit;
    text-decoration: none;
}

svg {
    display: block;
}

.sprite {
    position: absolute;
    width: 0;
    height: 0;
}

.icon {
    width: 10px;
    height: 10px;
    flex: none;
}

.caret,
.dot,
.play,
.up {
    flex: none;
    width: 0;
    height: 0;
    border: 2px solid transparent;
    border-top: 3px solid #c9cdd3;
    border-bottom: 0;
}

.dot {
    border-width: 2px 1px 0;
}

.play {
    border: 2px solid transparent;
    border-left: 3px solid #dfe1e4;
    border-right: 0;
}

.corner {
    width: 3px;
    height: 3px;
    border: 1px solid #aab0b8;
    border-width: 0 1px 1px 0;
}

/* Title bar */
.titlebar {
    position: relative;
    flex: none;
    display: flex;
    height: 10px;
    background: #454f61;
}

.titlebar button {
    display: flex;
    align-items: center;
    gap: 2px;
}

.titlebar .app-button {
    position: absolute;
    z-index: 2;
    left: 0;
    top: 0;
    width: 17px;
    height: 19px;
    overflow: hidden;
    background: linear-gradient(#b5b7ba, #7e8187);
    border-right: 1px solid #5b626e;
}

.app-logo {
    font: bold 20px "Liberation Serif", serif;
    fill: #c3202b;
}

.quick-access {
    display: flex;
    align-items: center;
    gap: 3px;
    height: 8px;
    padding-left: 22px;
}

.title {
    flex: 1;
    display: flex;
    justify-content: center;
    gap: 6px;
    color: #939aa5;
}

.account {
    display: flex;
    align-items: center;
    gap: 3px;
    height: 8px;
    padding-right: 4px;
}

.search {
    width: 95px;
    height: 8px;
    padding-left: 1px;
    border-left: 1px solid #303846;
    border-right: 1px solid #303846;
}

.search::placeholder {
    color: #b4bac3;
    font-style: italic;
    opacity: 1;
}

.account .user {
    color: #e1e4e8;
    margin-right: 4px;
}

.account .help {
    margin-left: 7px;
    margin-right: 39px;
}

.help-mark {
    width: 8px;
    height: 8px;
    border-radius: 4px;
    background: #e6e9ed;
    color: #33507a;
    font-weight: bold;
    text-align: center;
}

/* Menu tabs */
.menu {
    flex: none;
    display: flex;
    height: 12px;
    padding-left: 21px;
    background: #222933;
    color: #b4b9c1;
    line-height: 12px;
}

.menu a {
    padding: 0 5px;
    margin-right: 1px;
}

.menu .active {
    padding-right: 7px;
    background: #3b4453;
    color: #dde0e4;
}

.ribbon-toggle {
    display: flex;
    align-items: center;
    gap: 3px;
    margin-left: 12px;
}

.pill {
    width: 8px;
    height: 4px;
    border-radius: 1px;
    background: #dfe1e4;
}

/* Ribbon */
.ribbon {
    flex: none;
    display: flex;
    height: 52px;
}

.panel {
    flex: none;
    display: flex;
    flex-direction: column;
    padding-top: 2px;
    background: #3b4453;
    border-right: 1px solid #2c3440;
}

.tools {
    display: grid;
    grid-template-rows: repeat(3, 13px);
    align-items: center;
    justify-items: center;
}

.panel h2 {
    display: flex;
    align-items: center;
    justify-content: center;
    gap: 4px;
    height: 11px;
    margin: 0;
    font-size: 6px;
    font-weight: normal;
}

.big {
    grid-row: 1 / 4;
    align-self: start;
    line-height: 8px;
    text-align: center;
}

.big svg {
    width: 18px;
    height: 20px;
    margin: 0 auto;
}

.big .dot {
    display: block;
    margin: 1px auto 0;
}

.item {
    display: flex;
    align-items: center;
    gap: 2px;
    justify-self: start;
    white-space: nowrap;
}

.item .dot {
    margin-left: 3px;
}

.pressed {
    background: #46658a;
    box-shadow: inset 0 0 0 1px #5d9fd6;
}

.field {
    display: flex;
    align-items: center;
    gap: 1px;
    justify-self: stretch;
    height: 10px;
    padding: 0 2px 0 1px;
    background: #4c586c;
    color: #dfe2e6;
}

.field select {
    flex: 1;
    min-width: 0;
    appearance: none;
}

.modeling { width: 99px; }
.modeling .tools { grid-template-columns: 18px 38px 1fr; }
.modeling .item { grid-column: 3; gap: 3px; }

.mesh { width: 42px; }
.mesh .tools { grid-template-columns: 26px 14px; }
.mesh h2 { justify-content: flex-end; gap: 11px; padding-right: 2px; }

.solid { width: 94px; }
.solid .tools { grid-template-columns: 16px 16px 1fr; }

.draw { width: 51px; }
.draw .tools { grid-template-columns: 15px 12px 18px 2px; }

.modify { width: 78px; }
.modify .tools { grid-template-columns: 14px 15px 13px 16px 11px 7px; }

.section-plane { width: 41px; }
.section-plane .tools { grid-template-columns: 1fr; }

.coordinates { width: 79px; }
.coordinates .tools { grid-template-columns: 15px 4px 18px 14px 14px 12px; }
.coordinates .field { grid-column: 3 / 7; margin-left: 5px; }
.coordinates h2 { justify-content: flex-end; gap: 18px; padding-right: 2px; }

.view { width: 111px; }
.view .tools { grid-template-columns: 1fr; padding: 0 2px 0 1px; }
.view .item { padding-left: 1px; }

.selection { width: 93px; }
.selection .tools { grid-template-columns: 26px 34px 32px; }
.selection .pressed { width: 24px; height: 39px; padding-bottom: 11px; }
.selection .gizmo { grid-column: 3; }
.selection .tools > .dot { grid-column: 3; grid-row: 3; justify-self: end; align-self: start; margin-right: 3px; }

.layers { width: 148px; }
.layers .tools { grid-template-columns: 34px 12px 13px 13px 13px 1fr; }
.layers .field { grid-column: 2 / 7; height: 11px; margin-right: 2px; gap: 2px; }
.layers .item { padding-left: 2px; }

.swatch {
    width: 7px;
    height: 7px;
    margin-right: 2px;
    background: #fff;
}

.groups { width: 37px; }
.groups .tools { grid-template-columns: 23px 13px; }
.groups .pressed { padding: 1px; }

.base { width: 33px; }
.base .tools { grid-template-columns: 1fr; }

/* Drawing tabs */
.files {
    flex: none;
    display: flex;
    align-items: flex-end;
    height: 17px;
    padding-left: 6px;
    border-bottom: 2px solid #3c4655;
}

.file {
    display: flex;
    justify-content: space-between;
    width: 70px;
    height: 12px;
    padding: 0 7px;
    background: #2f3743;
    border-radius: 4px 4px 0 0;
    line-height: 12px;
}

.file.current {
    width: 65px;
    background: #3b4453;
    padding: 0 6px 0 4px;
    color: #dde0e4;
}

.add {
    width: 11px;
    height: 9px;
    margin: 0 0 1px 4px;
    border-radius: 3px;
    background: #2f3743;
    font-size: 9px;
    line-height: 8px;
}

/* Model space */
.viewport {
    position: relative;
    flex: 1;
    min-height: 0;
    overflow: hidden;
    background: #212830;
}

.scene {
    position: absolute;
    width: 100%;
    height: 100%;
    font: 10px "Liberation Sans", sans-serif;
}

.view-label {
    position: absolute;
    left: 0;
    top: 4px;
    color: #d5d7da;
}

.view-controls {
    position: absolute;
    top: 4px;
    right: -3px;
    display: flex;
    gap: 2px;
}

.navigator {
    position: absolute;
    top: 35px;
    right: 1px;
    display: flex;
    flex-direction: column;
    align-items: center;
    gap: 8px;
}

.compass,
.faces {
    font-family: "Liberation Sans", sans-serif;
    font-weight: bold;
    fill: #a5a8ab;
}

.faces {
    font-size: 5px;
    fill: #56585b;
}

.wcs {
    display: flex;
    align-items: center;
    gap: 4px;
    width: 26px;
    height: 9px;
    padding-left: 3px;
    border-radius: 2px;
    background: #9da1ab;
    color: #5a606c;
}

.wcs .caret {
    border-top-color: #7c828e;
}

.navbar {
    position: absolute;
    top: 128px;
    right: -5px;
    border-radius: 3px;
    background: #585d65;
}

.command {
    position: absolute;
    left: 206px;
    right: 196px;
    bottom: 0;
    height: 7px;
    display: flex;
    align-items: flex-start;
    overflow: hidden;
    background: #2a313c;
}

.grip {
    width: 3px;
    height: 7px;
    margin-right: 3px;
    border-left: 1px dotted #b5b9bf;
    border-right: 1px dotted #b5b9bf;
}

.cmd-button {
    width: 11px;
    height: 8px;
}

.cmd-line {
    flex: 1;
    display: flex;
    align-items: flex-start;
    height: 14px;
    padding-right: 2px;
    background: #bdbebf;
}

.cmd-line input {
    flex: 1;
    height: 14px;
    padding-left: 4px;
    font: 7px "Liberation Mono", monospace;
}

.cmd-line input::placeholder {
    color: #5f6266;
    opacity: 1;
}

.up {
    margin-top: 4px;
    border: 2px solid transparent;
    border-top: 0;
    border-bottom: 3px solid #444;
}
```
